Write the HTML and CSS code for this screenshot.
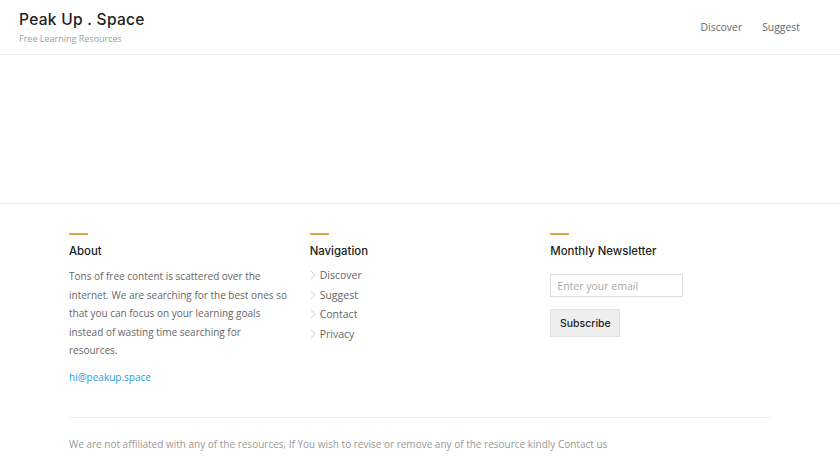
FILE: index.html
```html
<!DOCTYPE html>
<html lang="en">
<head>
<meta charset="utf-8">
<title>Peak Up . Space</title>
<link rel="stylesheet" href="styles.css">
</head>
<body>
<header class="site-header">
  <div class="brand">
    <div class="brand-title">Peak Up . Space</div>
    <div class="brand-tagline">Free Learning Resources</div>
  </div>
  <nav class="main-nav">
    <a href="#">Discover</a>
    <a href="#">Suggest</a>
  </nav>
</header>
<main class="content"></main>
<footer class="site-footer">
  <div class="footer-cols">
    <section class="col">
      <span class="accent"></span>
      <h3 class="col-title">About</h3>
      <p class="about-text">Tons of free content is scattered over the internet. We are searching for the best ones so that you can focus on your learning goals instead of wasting time searching for resources.</p>
      <a class="mail" href="#">hi@peakup.space</a>
    </section>
    <section class="col">
      <span class="accent"></span>
      <h3 class="col-title">Navigation</h3>
      <ul class="nav-list">
        <li><svg class="chev" viewBox="0 0 6 10" width="6" height="10"><path d="M1 1l4 4-4 4" fill="none" stroke="#cfcfcf" stroke-width="0.9"/></svg><a href="#">Discover</a></li>
        <li><svg class="chev" viewBox="0 0 6 10" width="6" height="10"><path d="M1 1l4 4-4 4" fill="none" stroke="#cfcfcf" stroke-width="0.9"/></svg><a href="#">Suggest</a></li>
        <li><svg class="chev" viewBox="0 0 6 10" width="6" height="10"><path d="M1 1l4 4-4 4" fill="none" stroke="#cfcfcf" stroke-width="0.9"/></svg><a href="#">Contact</a></li>
        <li><svg class="chev" viewBox="0 0 6 10" width="6" height="10"><path d="M1 1l4 4-4 4" fill="none" stroke="#cfcfcf" stroke-width="0.9"/></svg><a href="#">Privacy</a></li>
      </ul>
    </section>
    <section class="col">
      <span class="accent"></span>
      <h3 class="col-title">Monthly Newsletter</h3>
      <input class="email" type="text" placeholder="Enter your email">
      <button class="subscribe">Subscribe</button>
    </section>
  </div>
  <div class="footer-bottom">We are not affiliated with any of the resources, If You wish to revise or remove any of the resource kindly Contact us</div>
</footer>
</body>
</html>
```
FILE: styles.css
```css
* { box-sizing: border-box; }
html, body { margin: 0; padding: 0; background: #fff; }
body { font-family: "Open Sans", "Liberation Sans", sans-serif; color: #666; }
a { text-decoration: none; }

.site-header {
  height: 55px;
  border-bottom: 1px solid #efefef;
  display: flex;
  justify-content: space-between;
  align-items: flex-start;
  padding: 10px 0 0 19px;
}
.brand-title {
  font-family: "Inter", "Liberation Sans", sans-serif;
  font-size: 15.5px;
  font-weight: 500;
  color: #222;
  line-height: 20px;
  letter-spacing: 0.3px;
}
.brand-tagline {
  font-size: 9px;
  color: #a0a0a0;
  margin-top: 2px;
  line-height: 13px;
}
.main-nav {
  display: flex;
  gap: 20px;
  padding-top: 10px;
  padding-right: 40px;
}
.main-nav a {
  font-size: 10.4px;
  color: #666;
  line-height: 15px;
}

.content { height: 149px; border-bottom: 1px solid #efefef; }

.site-footer { width: 702px; margin: 0 auto; padding-top: 29px; }
.footer-cols {
  display: grid;
  grid-template-columns: repeat(3, 1fr);
  column-gap: 20px;
}
.accent {
  display: block;
  width: 19px;
  height: 2px;
  background: #e3a445;
}
.col-title {
  font-family: "Inter", "Liberation Sans", sans-serif;
  font-weight: 500;
  font-size: 11.4px;
  color: #222;
  margin: 8px 0 0;
  line-height: 16px;
}
.about-text {
  font-size: 10px;
  line-height: 18.5px;
  color: #666;
  margin: 8px 0 0;
}
.mail {
  display: block;
  margin-top: 8px;
  font-size: 10px;
  line-height: 18px;
  color: #1d9be0;
}
.nav-list { list-style: none; margin: 6px 0 0; padding: 0; }
.nav-list li {
  display: flex;
  align-items: center;
  height: 19.7px;
  font-size: 10.5px;
}
.nav-list .chev { margin-right: 4px; flex: none; }
.nav-list a { color: #666; }
.email {
  display: block;
  margin-top: 15px;
  width: 133px;
  height: 23px;
  border: 1px solid #ddd;
  padding: 0 6px;
  font-family: "Open Sans", "Liberation Sans", sans-serif;
  font-size: 10.5px;
  color: #666;
  outline: none;
}
.email::placeholder { color: #aaa; }
.subscribe {
  display: block;
  margin-top: 12px;
  width: 70px;
  height: 28px;
  background: #eee;
  border: 1px solid #e3e3e3;
  font-family: "Inter", "Liberation Sans", sans-serif;
  font-weight: 500;
  font-size: 10.5px;
  color: #222;
  padding: 0;
}
.footer-bottom {
  margin-top: 31px;
  border-top: 1px solid #f0f0f0;
  padding-top: 19px;
  font-size: 10px;
  line-height: 15px;
  color: #999;
}
```
